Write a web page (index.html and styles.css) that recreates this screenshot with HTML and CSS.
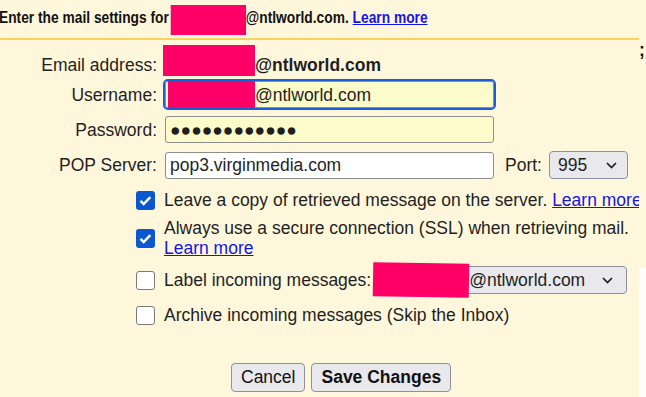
FILE: index.html
```html
<!DOCTYPE html>
<html>
<head>
<meta charset="utf-8">
<link rel="stylesheet" href="styles.css">
</head>
<body>
<div class="page">
  <div class="header"><div class="hdr-text">Enter the mail settings for<span class="redact r-hdr"></span>@ntlworld.com. <a class="link-b" href="#">Learn more</a></div></div>
  <div class="content">
    <div class="main">
      <div class="fields">
        <div class="frow row-email">
          <span class="lbl">Email address:</span>
          <div class="val"><span class="redact r-email"></span><b>@ntlworld.com</b></div>
        </div>
        <div class="frow row-user">
          <span class="lbl">Username:</span>
          <div class="input yellow focused"><span class="redact r-user"></span>@ntlworld.com</div>
        </div>
        <div class="frow row-pass">
          <span class="lbl">Password:</span>
          <div class="input yellow"><span class="dots">●●●●●●●●●●●●</span></div>
        </div>
        <div class="frow row-pop">
          <span class="lbl">POP Server:</span>
          <div class="pop-line">
            <div class="input white">pop3.virginmedia.com</div>
            <span class="port-lbl">Port:</span>
            <div class="select port"><span class="sel-text">995</span><svg class="chev" width="11" height="7" viewBox="0 0 11 7"><path d="M1 1l4.5 4.5L10 1" fill="none" stroke="#1f1f1f" stroke-width="1.7"/></svg></div>
          </div>
        </div>
      </div>

      <div class="checks">
        <div class="crow c1">
          <span class="cb checked"><svg width="19" height="19" viewBox="0 0 19 19"><path d="M4.5 9.8l3.2 3.2 6.6-6.8" fill="none" stroke="#fff" stroke-width="2.5"/></svg></span>
          <span class="ctext">Leave a copy of retrieved message on the server. <a href="#" class="link">Learn more</a></span>
        </div>
        <div class="crow c2">
          <span class="cb checked"><svg width="19" height="19" viewBox="0 0 19 19"><path d="M4.5 9.8l3.2 3.2 6.6-6.8" fill="none" stroke="#fff" stroke-width="2.5"/></svg></span>
          <span class="ctext">Always use a secure connection (SSL) when retrieving mail. <a href="#" class="link">Learn more</a></span>
        </div>
        <div class="crow c3">
          <span class="cb"></span>
          <span class="ctext">Label incoming messages:</span>
          <div class="select label-sel"><span class="redact r-sel"></span><span class="sel-text">@ntlworld.com</span><svg class="chev" width="11" height="7" viewBox="0 0 11 7"><path d="M1 1l4.5 4.5L10 1" fill="none" stroke="#1f1f1f" stroke-width="1.7"/></svg></div>
        </div>
        <div class="crow c4">
          <span class="cb"></span>
          <span class="ctext">Archive incoming messages (Skip the Inbox)</span>
        </div>
      </div>

      <div class="buttons">
        <button class="btn">Cancel</button>
        <button class="btn primary">Save Changes</button>
      </div>
    </div>
    <div class="side">
      <span class="semi">;</span>
      <div class="ghost"></div>
    </div>
  </div>
</div>
</body>
</html>
```

FILE: styles.css
```css
html, body {
  margin: 0;
  padding: 0;
  overflow: hidden;
}
body {
  background: #fef7dc;
  font-family: "Liberation Sans", Arial, sans-serif;
  color: #1f1f1f;
  font-size: 17.5px;
  line-height: 20px;
  width: 646px;
  height: 397px;
}
.page {
  width: 646px;
  height: 397px;
}
.header {
  width: 640px;
  height: 20px;
  margin-left: -1px;
  padding: 7px 0 11px 0;
  border-bottom: 2px solid #f9d262;
  font-size: 17px;
  font-weight: bold;
  line-height: 20px;
  white-space: nowrap;
  color: #111;
}
.hdr-text {
  height: 20px;
  transform: scaleX(0.81);
  transform-origin: left center;
}
.redact {
  display: inline-block;
  background: #ff0066;
}
.r-hdr {
  width: 93px;
  height: 30px;
  margin: -2px 0 -8px 2px;
  vertical-align: -4px;
}
.link-b, .link {
  color: #1414e6;
  text-decoration: underline;
}
.content {
  display: flex;
  height: 357px;
}
.main {
  width: 639px;
  overflow: hidden;
  flex: none;
}
.side {
  flex: 1;
  display: flex;
  flex-direction: column;
}
.semi {
  font-weight: bold;
  font-size: 17.5px;
  line-height: 20px;
  color: #111;
}
.ghost {
  margin-top: 208px;
  flex: 1;
  background: #fffefa;
}
.fields {
  display: flex;
  flex-direction: column;
  padding-top: 11px;
}
.frow {
  display: grid;
  grid-template-columns: 157px auto;
  column-gap: 8px;
  align-items: center;
  height: 27px;
}
.row-user { margin-top: 3px; }
.row-pass, .row-pop { margin-top: 8px; }
.lbl {
  text-align: right;
  white-space: nowrap;
}
.val {
  display: flex;
  align-items: center;
  height: 27px;
}
.val b {
  font-weight: bold;
}
.r-email {
  width: 92px;
  height: 31px;
  margin: -12px 0 -4px -2px;
}
.input {
  box-sizing: border-box;
  width: 329px;
  height: 27px;
  border: 1px solid #8d8d8d;
  border-radius: 3px;
  padding: 0 4px;
  display: flex;
  align-items: center;
  white-space: nowrap;
}
.yellow { background: #fefbca; }
.white { background: #fff; }
.focused {
  outline: 2px solid #1a5fd6;
  outline-offset: 0;
}
.r-user {
  width: 87px;
  height: 30px;
  margin: -3px 0 -3px -2px;
}
.dots {
  font-size: 17.5px;
}
.pop-line {
  display: flex;
  align-items: center;
}
.port-lbl {
  margin-left: 11px;
}
.select {
  box-sizing: border-box;
  height: 28px;
  border: 1px solid #8f8f9d;
  border-radius: 4px;
  background: #e9e9ed;
  display: flex;
  align-items: center;
  white-space: nowrap;
}
.port {
  width: 79px;
  margin-left: 7px;
  padding: 0 10px 0 8px;
}
.sel-text { flex: 1; }
.chev { flex: none; }
.checks {
  margin-left: 136px;
  margin-top: 12px;
  display: flex;
  flex-direction: column;
}
.crow {
  display: flex;
  align-items: center;
}
.c1 { white-space: nowrap; }
.c2, .c3 { margin-top: 8px; }
.c4 { margin-top: 11px; }
.cb {
  box-sizing: border-box;
  width: 19px;
  height: 19px;
  border-radius: 3px;
  border: 1.5px solid #7a7a7a;
  background: #fff;
  flex: none;
  margin-right: 9px;
  display: flex;
}
.cb.checked {
  background: #0b57d0;
  border: none;
}
.label-sel {
  width: 250px;
  margin-left: 6px;
  padding: 0 13px 0 0;
}
.r-sel {
  width: 96px;
  height: 34px;
  margin: -3px 0 -3px -5px;
  transform: rotate(1deg);
}
.buttons {
  display: flex;
  gap: 6px;
  padding-left: 231px;
  margin-top: 38px;
}
.btn {
  box-sizing: border-box;
  height: 29px;
  font-family: "Liberation Sans", Arial, sans-serif;
  font-size: 17.5px;
  color: #111;
  background: #e9e9ed;
  border: 1px solid #8f8f9d;
  border-radius: 4px;
  padding: 0 9px;
}
.btn.primary {
  font-weight: bold;
}
```
